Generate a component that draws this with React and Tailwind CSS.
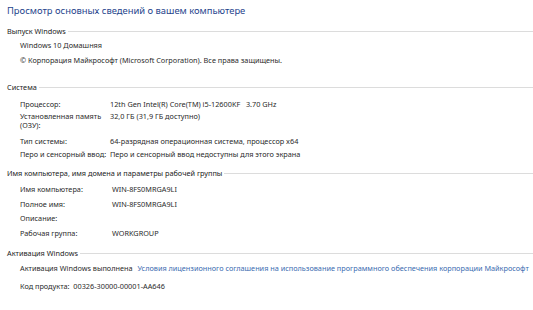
import React from "react";

const font = { fontFamily: '"Noto Sans", "Open Sans", Arial, sans-serif' };

function Header({ children, className = "" }) {
  return (
    <div className={"flex items-center h-[10px] leading-[10px] text-[7.3px] text-[#222] " + className}>
      <span className="whitespace-nowrap pl-[7px] pr-[2px]">{children}</span>
      <div className="flex-1 h-px bg-[#dcdcdc]" />
    </div>
  );
}

function Row({ label, value, className = "", valueClass = "w-[90px]" }) {
  return (
    <div className={"flex h-[10px] leading-[10px] text-[7.3px] text-[#2a2a2a] pl-[20px] whitespace-nowrap " + className}>
      <div className={valueClass}>{label}</div>
      <div>{value}</div>
    </div>
  );
}

export default function App() {
  return (
    <div className="w-[533px] h-[310px] bg-white overflow-hidden" style={font}>
      <div className="pt-[4px] pl-[7px] h-[18px] text-[9.4px] leading-[14px] text-[#25448c] whitespace-nowrap">
        Просмотр основных сведений о вашем компьютере
      </div>

      <Header className="mt-[8px]">Выпуск Windows</Header>
      <div className="mt-[4px] pl-[20px] h-[10px] leading-[10px] text-[7.3px] text-[#2a2a2a] whitespace-nowrap">
        Windows 10 Домашняя
      </div>
      <div className="mt-[5px] pl-[20px] h-[10px] leading-[10px] text-[7.3px] text-[#2a2a2a] whitespace-nowrap">
        © Корпорация Майкрософт (Microsoft Corporation). Все права защищены.
      </div>

      <Header className="mt-[17px]">Система</Header>
      <Row className="mt-[7px]" label="Процессор:" value={"12th Gen Intel(R) Core(TM) i5-12600KF\u00a0\u00a0\u00a03.70 GHz"} />
      <div className="mt-[3px] flex pl-[20px] text-[7.3px] leading-[9px] text-[#2a2a2a] whitespace-nowrap">
        <div className="w-[90px]">
          Установленная память
          <br />
          (ОЗУ):
        </div>
        <div>32,0 ГБ (31,9 ГБ доступно)</div>
      </div>
      <Row className="mt-[6px]" label="Тип системы:" value="64-разрядная операционная система, процессор x64" />
      <Row className="mt-[3px]" label="Перо и сенсорный ввод:" value="Перо и сенсорный ввод недоступны для этого экрана" />

      <Header className="mt-[9px]">Имя компьютера, имя домена и параметры рабочей группы</Header>
      <Row className="mt-[6px]" valueClass="w-[92px]" label="Имя компьютера:" value="WIN-8FS0MRGA9LI" />
      <Row className="mt-[5px]" valueClass="w-[92px]" label="Полное имя:" value="WIN-8FS0MRGA9LI" />
      <Row className="mt-[4px]" valueClass="w-[92px]" label="Описание:" value="" />
      <Row className="mt-[5px]" valueClass="w-[92px]" label="Рабочая группа:" value="WORKGROUP" />

      <Header className="mt-[10px]">Активация Windows</Header>
      <div className="mt-[5px] flex pl-[20px] h-[10px] leading-[10px] text-[7.3px] text-[#2a2a2a] whitespace-nowrap">
        <span>Активация Windows выполнена</span>
        <span className="ml-[5px] text-[#3a6bb0]">
          Условия лицензионного соглашения на использование программного обеспечения корпорации Майкрософт
        </span>
      </div>
      <div className="mt-[8px] pl-[20px] h-[10px] leading-[10px] text-[7.3px] text-[#2a2a2a] whitespace-nowrap">
        Код продукта:&nbsp; 00326-30000-00001-AA646
      </div>
    </div>
  );
}
